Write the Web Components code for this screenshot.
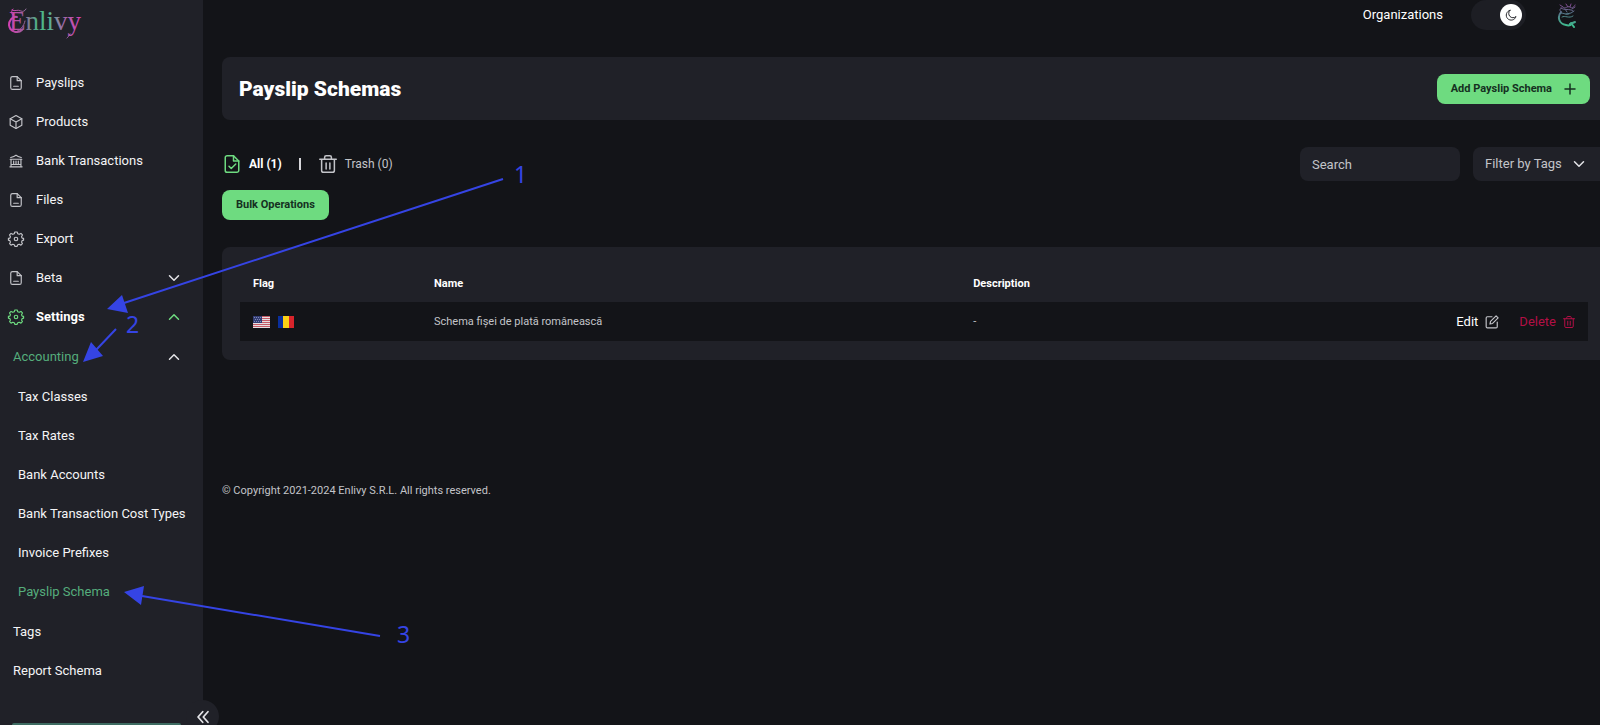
<!DOCTYPE html>
<html lang="en">
<head>
<meta charset="utf-8">
<meta name="viewport" content="width=device-width, initial-scale=1">
<title>Payslip Schemas - Enlivy</title>
<style>
  :root {
    --bg: #131418;
    --panel: #202128;
    --text: #f4f4f6;
    --muted: #c3c4c9;
    --green: #6edb80;
    --green-soft: #55ad7c;
    --danger: #b30f45;
    --note: #3544e4;
    --size: 13px;
    --size-small: 11px;
  }

  body {
    margin: 0;
    overflow: hidden;
    background: var(--bg);
    color: var(--text);
    font: 13px/20px Roboto, "Liberation Sans", sans-serif;
  }
</style>
</head>
<body>
<enlivy-app></enlivy-app>

<script>
/**
 * Line icons, drawn on a 24x24 grid
 */
const ICONS = {
  file: '<path d="M14 1H6a3 3 0 0 0-3 3v16a3 3 0 0 0 3 3h12a3 3 0 0 0 3-3V8z"/><path d="M14 1v7h7M8 17.500h8"/>',
  box: '<path d="M12 1l10 5.500v11L12 23 2 17.500v-11z"/><path d="M2 6.500L12 12l10-5.500M12 12v11"/>',
  bank: '<path d="M2 9h20M3.500 9v12M20.500 9v12M1.500 22h21M3.500 18h17M8 12v5M12 12v5M16 12v5M3 6c3-1 6-2 9-4 3 2 6 3 9 4"/>',
  gear: '<circle cx="12" cy="12" r="3"/><path d="M10 0h4l1 3 2.500 1 3-1.500L23 5l-1.500 3 1 2.500 2.500.5v3l-2.500.8-1 2.500L23 20l-2.500 2.500-3-1.500-2.500 1-1 2.500h-4L9 22l-2.500-1-3 1.500L1 20l1.500-2.700-1-2.500L-1 14v-3l2.500-.5 1-2.500L1 5l2.500-2.500 3 1.500L9 3z"/>',
  down: '<path d="M3 7.500l9 9 9-9"/>',
  up: '<path d="M3 16.500l9-9 9 9"/>',
  left: '<path d="M11.500 3l-8 9 8 9M20.500 3l-8 9 8 9"/>',
  plus: '<path d="M12 2v20M2 12h20"/>',
  moon: '<path d="M10 2.500a10 10 0 1 0 12 12.500A8.500 8.500 0 0 1 10 2.500z"/>',
  check: '<path d="M14 1H5.500A2.500 2.500 0 0 0 3 3.500v17A2.500 2.500 0 0 0 5.500 23h13a2.500 2.500 0 0 0 2.500-2.500V8z"/><path d="M14 1v7h7M8 15l3 3 6-6"/>',
  trash: '<path d="M1 5.500h22M7.500 5V3A2 2 0 0 1 9.500 1h5a2 2 0 0 1 2 2v2M3.500 5.500V20.500A2.500 2.500 0 0 0 6 23h12a2.500 2.500 0 0 0 2.500-2.500V5.500M9.500 10.500v8M14.500 10.500v8"/>',
  edit: '<path d="M12 3H4a2 2 0 0 0-2 2v15a2 2 0 0 0 2 2h15a2 2 0 0 0 2-2v-8"/><path d="M8.500 15.500l1-4.500L19 1.500l3.500 3.500L13 14.500z"/>'
};

class AppIcon extends HTMLElement {
  connectedCallback() {
    const name = this.getAttribute('name');
    const weight = this.getAttribute('weight') || '2';
    this.attachShadow({ mode: 'open' }).innerHTML = `
      <style>
        :host { display: inline-flex; flex: none; width: 14px; height: 14px; }
        :host([size="small"]) { width: 12px; height: 12px; }
        :host([size="large"]) { width: 18px; height: 18px; }
        svg { width: 100%; height: 100%; overflow: visible; }
      </style>
      <svg viewBox="0 0 24 24" fill="none" stroke="currentColor" stroke-width="${weight}"
        stroke-linejoin="round" stroke-linecap="round" aria-hidden="true">${ICONS[name] || ''}</svg>
    `;
  }
}

/**
 * Sidebar entry. level 1 has an icon, 2 and 3 are indented sub entries
 */
class NavItem extends HTMLElement {
  connectedCallback() {
    const icon = this.getAttribute('icon');
    const arrow = this.getAttribute('arrow');
    this.attachShadow({ mode: 'open' }).innerHTML = `
      <style>
        :host { display: block; color: var(--text); }
        :host([active]) { color: var(--green-soft); }
        a {
          display: flex;
          align-items: center;
          height: 39px;
          padding: 0 23px 0 9px;
          color: inherit;
          font-size: var(--size);
          text-decoration: none;
          white-space: nowrap;
        }
        :host([level="2"]) a { padding-left: 13px; }
        :host([level="3"]) a { padding-left: 18px; padding-right: 0; }
        .icon { margin-right: 13px; color: var(--muted); }
        .label { flex: 1; }
        .arrow { color: #e4e4e8; }
        :host([current]) .label { font-weight: 700; color: #fff; }
        :host([current]) .icon, :host([current]) .arrow { color: var(--green); }
      </style>
      <a href="#">
        ${icon ? `<app-icon class="icon" name="${icon}"></app-icon>` : ''}
        <span class="label"><slot></slot></span>
        ${arrow ? `<app-icon class="arrow" size="small" weight="3" name="${arrow}"></app-icon>` : ''}
      </a>
    `;
  }
}

class NavGroup extends HTMLElement {
  connectedCallback() {
    this.attachShadow({ mode: 'open' }).innerHTML = `
      <style>
        :host { display: block; padding: 1px 0; }
      </style>
      <slot></slot>
    `;
  }
}

class BrandLogo extends HTMLElement {
  connectedCallback() {
    this.attachShadow({ mode: 'open' }).innerHTML = `
      <style>
        :host { display: block; width: 84px; height: 42px; }
        svg { display: block; width: 84px; height: 42px; }
        text { font: 27px "Liberation Serif", serif; }
      </style>
      <svg viewBox="0 0 84 42" role="img" aria-label="Enlivy">
        <defs>
          <linearGradient id="brand" gradientUnits="userSpaceOnUse" x1="8" y1="0" x2="80" y2="0">
            <stop offset="0" stop-color="#d63fb4"/>
            <stop offset=".200" stop-color="#a35a9c"/>
            <stop offset=".400" stop-color="#4fae86"/>
            <stop offset=".550" stop-color="#4fbf8c"/>
            <stop offset=".750" stop-color="#9a6fa8"/>
            <stop offset="1" stop-color="#d63fb4"/>
          </linearGradient>
        </defs>
        <text x="9" y="30" fill="url(#brand)">Enlivy</text>
        <g fill="none" stroke="url(#brand)" stroke-linecap="round">
          <path d="M12 10c3 2 5-1 9 1 2 1 4 0 5-2M13 9c-3 3-1 7 3 8"/>
          <path d="M17 17c-5-1-8 4-8 8 1 7 9 9 13 5" stroke-width="2"/>
          <path d="M25 21c-1 5-5 10-10 11M70 34c-1 2-2 3-3 4"/>
        </g>
      </svg>
    `;
  }
}

class AppSidebar extends HTMLElement {
  connectedCallback() {
    this.attachShadow({ mode: 'open' }).innerHTML = `
      <style>
        :host {
          position: relative;
          display: flex;
          flex-direction: column;
          box-sizing: border-box;
          height: 100vh;
          background: var(--panel);
        }
        header { height: 63px; flex: none; }
        nav { flex: none; }
        .bar {
          height: 2px;
          margin: auto 22px 0 12px;
          border-radius: 4px 4px 0 0;
          background: #3d6b61;
        }
        .collapse {
          position: absolute;
          right: -16px;
          bottom: -8px;
          display: flex;
          align-items: center;
          justify-content: center;
          width: 33px;
          height: 33px;
          padding: 0;
          border: 0;
          border-radius: 50%;
          background: var(--panel);
          color: #e4e4e8;
        }
      </style>
      <header><brand-logo></brand-logo></header>
      <nav aria-label="Main"><slot></slot></nav>
      <div class="bar"></div>
      <button class="collapse" aria-label="Collapse menu"><app-icon name="left" weight="3"></app-icon></button>
    `;
  }
}

class ThemeSwitch extends HTMLElement {
  connectedCallback() {
    this.attachShadow({ mode: 'open' }).innerHTML = `
      <style>
        :host { display: block; }
        label {
          display: flex;
          align-items: center;
          justify-content: flex-end;
          box-sizing: border-box;
          width: 55px;
          height: 30px;
          padding-right: 4px;
          border-radius: 15px;
          background: #1d1e24;
        }
        input { appearance: none; width: 0; height: 0; margin: 0; }
        .knob {
          display: flex;
          align-items: center;
          justify-content: center;
          width: 22px;
          height: 22px;
          border-radius: 50%;
          background: #fff;
          color: #26272c;
        }
      </style>
      <label>
        <input type="checkbox" role="switch" aria-label="Dark mode" checked>
        <span class="knob"><app-icon size="small" name="moon"></app-icon></span>
      </label>
    `;
  }
}

class UserAvatar extends HTMLElement {
  connectedCallback() {
    this.attachShadow({ mode: 'open' }).innerHTML = `
      <style>
        :host { display: block; }
        a, svg { display: block; width: 20px; height: 26px; }
      </style>
      <a href="#" aria-label="Account">
        <svg viewBox="0 0 20 26" fill="none" stroke="url(#mark)" stroke-linecap="round">
          <defs>
            <linearGradient id="mark" gradientUnits="userSpaceOnUse" x1="0" y1="1" x2="0" y2="25">
              <stop offset="0" stop-color="#87408f"/>
              <stop offset=".450" stop-color="#557a8a"/>
              <stop offset="1" stop-color="#3cc08e"/>
            </linearGradient>
          </defs>
          <path d="M3 3l3 2M5 6c-2 0-3 2-1 4M6 5c2 3 5-2 7 0s4 0 5-2M9 2l2 3M14 2l-1 3M18 5l-3 2M4 6c4 3 8 0 12 3M8 7l2 3"/>
          <path d="M4 11c3 0 5 2 8 1M9 12l5-1 3-2M5 15c3-2 7 2 11-1"/>
          <path d="M4 10c-4 5-2 12 5 13 3 1 5 0 6-2M13 22l5-2M14 21l3 4" stroke-width="2"/>
        </svg>
      </a>
    `;
  }
}

class TopBar extends HTMLElement {
  connectedCallback() {
    this.attachShadow({ mode: 'open' }).innerHTML = `
      <style>
        :host {
          display: flex;
          align-items: center;
          justify-content: flex-end;
          height: 30px;
          padding-right: 23px;
        }
        a { margin-right: 28px; color: #fff; font-size: var(--size); text-decoration: none; }
        theme-switch { margin-right: 31px; }
        user-avatar a { margin: 0; }
      </style>
      <a href="#">Organizations</a>
      <theme-switch></theme-switch>
      <user-avatar></user-avatar>
    `;
  }
}

class UiButton extends HTMLElement {
  connectedCallback() {
    const icon = this.getAttribute('icon');
    this.attachShadow({ mode: 'open' }).innerHTML = `
      <style>
        :host { display: inline-block; }
        button {
          display: flex;
          align-items: center;
          gap: 12px;
          height: 30px;
          padding: 0 14px;
          border: 0;
          border-radius: 8px;
          background: var(--green);
          color: #15301f;
          font: 700 var(--size-small)/20px Roboto, sans-serif;
          white-space: nowrap;
        }
      </style>
      <button type="button"><slot></slot>${icon ? `<app-icon size="small" name="${icon}" weight="3"></app-icon>` : ''}</button>
    `;
  }
}

class PageHeader extends HTMLElement {
  connectedCallback() {
    this.attachShadow({ mode: 'open' }).innerHTML = `
      <style>
        :host {
          display: flex;
          align-items: center;
          justify-content: space-between;
          height: 63px;
          padding: 0 10px 0 17px;
          border-radius: 8px 0 0 8px;
          background: var(--panel);
        }
        h1 { margin: 0; color: #fff; font-size: 21px; line-height: 28px; font-weight: 900; }
      </style>
      <h1>${this.getAttribute('heading')}</h1>
      <slot></slot>
    `;
  }
}

class ListFilters extends HTMLElement {
  connectedCallback() {
    this.attachShadow({ mode: 'open' }).innerHTML = `
      <style>
        :host { display: flex; align-items: center; height: 34px; }
        a {
          display: flex;
          align-items: center;
          gap: 8px;
          color: var(--muted);
          font-size: 12px;
          text-decoration: none;
        }
        a.all { padding-left: 1px; color: #fff; font-weight: 700; }
        a.all app-icon { color: var(--green); }
        .divider { width: 2px; height: 12px; margin: 0 18px 0 17px; background: #d6d6da; }
        .tools { display: flex; gap: 13px; margin-left: auto; }
        input, select {
          box-sizing: border-box;
          height: 34px;
          margin: 0;
          padding: 0 12px;
          border: 0;
          border-radius: 8px;
          background: var(--panel);
          color: var(--muted);
          font: var(--size)/20px Roboto, sans-serif;
        }
        input { width: 160px; }
        input::placeholder { color: var(--muted); }
        .select { position: relative; display: flex; align-items: center; }
        select { appearance: none; width: 127px; border-radius: 8px 0 0 8px; }
        .select app-icon { position: absolute; right: 15px; color: #e4e4e8; pointer-events: none; }
      </style>
      <a class="all" href="#"><app-icon size="large" name="check"></app-icon>All (1)</a>
      <span class="divider"></span>
      <a href="#"><app-icon size="large" name="trash"></app-icon>Trash (0)</a>
      <div class="tools">
        <input type="search" placeholder="Search" aria-label="Search">
        <div class="select">
          <select aria-label="Filter by Tags"><option>Filter by Tags</option></select>
          <app-icon size="small" name="down" weight="3"></app-icon>
        </div>
      </div>
    `;
  }
}

class CountryFlag extends HTMLElement {
  connectedCallback() {
    const us = `
      <path fill="#e6dfe2" d="M0 0h17v12H0z"/>
      <path stroke="#c65a66" d="M0 .500h17M0 2.500h17M0 4.500h17M0 6.500h17M0 8.500h17M0 10.500h17"/>
      <path fill="#333d73" d="M0 0h9v7H0z"/>
      <path stroke="#7f87b4" stroke-dasharray="1 1" d="M1 1.500h7M2 3.500h6M1 5.500h7"/>`;
    const ro = '<path fill="#0a2f9c" d="M0 0h6v12H0z"/><path fill="#fbd116" d="M5 0h6v12H5z"/><path fill="#d8242b" d="M11 0h5v12h-5z"/>';
    const isUs = this.getAttribute('code') === 'us';
    this.attachShadow({ mode: 'open' }).innerHTML = `
      <style>
        :host { display: inline-block; width: ${isUs ? 17 : 16}px; height: 12px; }
        svg { display: block; width: 100%; height: 12px; }
      </style>
      <svg viewBox="0 0 ${isUs ? 17 : 16} 12" role="img" aria-label="${isUs ? 'United States' : 'Romania'}">${isUs ? us : ro}</svg>
    `;
  }
}

class SchemaTable extends HTMLElement {
  connectedCallback() {
    this.attachShadow({ mode: 'open' }).innerHTML = `
      <style>
        :host {
          display: block;
          padding: 18px 12px 19px 18px;
          border-radius: 8px 0 0 8px;
          background: var(--panel);
        }
        table { width: 100%; border-collapse: collapse; table-layout: fixed; }
        th, td { padding: 0 0 0 13px; text-align: left; font-size: var(--size-small); }
        th { height: 37px; color: #fff; font-weight: 700; }
        td { height: 39px; background: var(--bg); color: var(--muted); }
        .flag { width: 181px; }
        .name { width: 40%; }
        .actions { width: 30%; }
        td.flags country-flag { margin-right: 8px; vertical-align: middle; }
        .buttons { display: flex; justify-content: flex-end; gap: 20px; padding-right: 13px; }
        button {
          display: flex;
          align-items: center;
          gap: 7px;
          padding: 0;
          border: 0;
          background: none;
          color: #fff;
          font: var(--size)/20px Roboto, sans-serif;
        }
        button app-icon { color: var(--muted); }
        .delete, .delete app-icon { color: var(--danger); }
      </style>
      <table>
        <colgroup><col class="flag"><col class="name"><col><col class="actions"></colgroup>
        <thead>
          <tr><th>Flag</th><th>Name</th><th>Description</th><th aria-label="Actions"></th></tr>
        </thead>
        <tbody>
          <tr>
            <td class="flags"><country-flag code="us"></country-flag><country-flag code="ro"></country-flag></td>
            <td>Schema fișei de plată românească</td>
            <td>-</td>
            <td>
              <div class="buttons">
                <button type="button">Edit <app-icon name="edit"></app-icon></button>
                <button type="button" class="delete">Delete <app-icon size="small" name="trash"></app-icon></button>
              </div>
            </td>
          </tr>
        </tbody>
      </table>
    `;
  }
}

/**
 * Numbered arrows that lie over the page and lead through the menu
 */
class GuideNotes extends HTMLElement {
  connectedCallback() {
    this.attachShadow({ mode: 'open' }).innerHTML = `
      <style>
        :host { position: absolute; top: 0; left: 0; pointer-events: none; }
        svg { display: block; }
        text { font: 23px "Noto Sans", sans-serif; }
      </style>
      <svg width="560" height="700" fill="var(--note)">
        <g stroke="var(--note)" stroke-width="2">
          <path d="M503 179L124 303M116 329L96 350M380 636L142 596"/>
        </g>
        <path d="M107 309l15-14 6 18zM83 362l8-20 12 14zM124 592l20-6-3 19z"/>
        <text x="514" y="183">1</text>
        <text x="126" y="333">2</text>
        <text x="397" y="643">3</text>
      </svg>
    `;
  }
}

class EnlivyApp extends HTMLElement {
  connectedCallback() {
    this.attachShadow({ mode: 'open' }).innerHTML = `
      <style>
        :host {
          display: grid;
          grid-template-columns: 203px minmax(0, 1fr);
          height: 100vh;
          overflow: hidden;
        }
        main { padding-left: 19px; }
        page-header { margin-top: 27px; }
        list-filters { margin-top: 27px; }
        .bulk { display: flex; margin: 9px 0 27px; }
        footer { margin-top: 121px; color: var(--muted); font-size: var(--size-small); }
      </style>
      <app-sidebar>
        <nav-item icon="file">Payslips</nav-item>
        <nav-item icon="box">Products</nav-item>
        <nav-item icon="bank">Bank Transactions</nav-item>
        <nav-item icon="file">Files</nav-item>
        <nav-item icon="gear">Export</nav-item>
        <nav-item icon="file" arrow="down">Beta</nav-item>
        <nav-item icon="gear" arrow="up" current>Settings</nav-item>
        <nav-group>
          <nav-item level="2" arrow="up" active>Accounting</nav-item>
          <nav-group>
            <nav-item level="3">Tax Classes</nav-item>
            <nav-item level="3">Tax Rates</nav-item>
            <nav-item level="3">Bank Accounts</nav-item>
            <nav-item level="3">Bank Transaction Cost Types</nav-item>
            <nav-item level="3">Invoice Prefixes</nav-item>
            <nav-item level="3" active>Payslip Schema</nav-item>
          </nav-group>
          <nav-item level="2">Tags</nav-item>
          <nav-item level="2">Report Schema</nav-item>
        </nav-group>
      </app-sidebar>
      <main>
        <top-bar></top-bar>
        <page-header heading="Payslip Schemas">
          <ui-button icon="plus">Add Payslip Schema</ui-button>
        </page-header>
        <list-filters></list-filters>
        <div class="bulk"><ui-button>Bulk Operations</ui-button></div>
        <schema-table></schema-table>
        <footer>© Copyright 2021-2024 Enlivy S.R.L. All rights reserved.</footer>
      </main>
      <guide-notes></guide-notes>
    `;
  }
}

customElements.define('app-icon', AppIcon);
customElements.define('nav-item', NavItem);
customElements.define('nav-group', NavGroup);
customElements.define('brand-logo', BrandLogo);
customElements.define('app-sidebar', AppSidebar);
customElements.define('theme-switch', ThemeSwitch);
customElements.define('user-avatar', UserAvatar);
customElements.define('top-bar', TopBar);
customElements.define('ui-button', UiButton);
customElements.define('page-header', PageHeader);
customElements.define('list-filters', ListFilters);
customElements.define('country-flag', CountryFlag);
customElements.define('schema-table', SchemaTable);
customElements.define('guide-notes', GuideNotes);
customElements.define('enlivy-app', EnlivyApp);
</script>
</body>
</html>
